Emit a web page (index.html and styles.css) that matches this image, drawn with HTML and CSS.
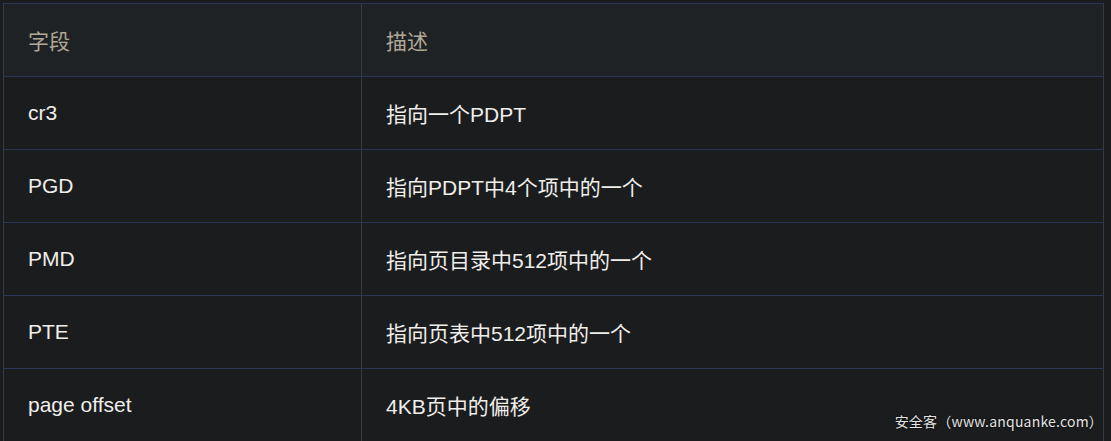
FILE: index.html
```html
<!DOCTYPE html>
<html lang="zh">
<head>
<meta charset="utf-8">
<link rel="stylesheet" href="styles.css">
</head>
<body>
<div class="wrap">
<table class="tbl">
  <thead>
    <tr><th class="c1">字段</th><th>描述</th></tr>
  </thead>
  <tbody>
    <tr><td class="c1">cr3</td><td>指向一个PDPT</td></tr>
    <tr><td class="c1">PGD</td><td>指向PDPT中4个项中的一个</td></tr>
    <tr><td class="c1">PMD</td><td>指向页目录中512项中的一个</td></tr>
    <tr><td class="c1">PTE</td><td>指向页表中512项中的一个</td></tr>
    <tr><td class="c1">page offset</td><td>4KB页中的偏移</td></tr>
  </tbody>
</table>
<div class="mark">安全客（www.anquanke.com）</div>
</div>
</body>
</html>
```
FILE: styles.css
```css
html, body {
  margin: 0;
  padding: 0;
  background: #1b1c1e;
  overflow: hidden;
}
.wrap {
  position: relative;
  width: 1111px;
  height: 441px;
  padding: 3px 0 0 3px;
  box-sizing: border-box;
}
.tbl {
  border-collapse: collapse;
  width: 1101px;
  font-family: "Liberation Sans", "Noto Sans CJK SC", sans-serif;
  font-size: 21px;
  table-layout: fixed;
}
.tbl th, .tbl td {
  padding: 0 0 0 24px;
  text-align: left;
  vertical-align: middle;
  border-left: 1px solid #343a44;
  border-right: 1px solid #343a44;
  border-top: 1px solid #2b3656;
  border-bottom: 1px solid #2b3656;
  box-sizing: border-box;
}
.tbl th {
  font-weight: normal;
  color: #b0a896;
  background: #1f2224;
  height: 73px;
}
.tbl td {
  color: #efeeeb;
  background: #1b1c1e;
  height: 73px;
}
.c1 {
  width: 358px;
}
.mark {
  position: absolute;
  right: 8px;
  bottom: 10px;
  font-family: "Noto Sans CJK SC", "Liberation Sans", sans-serif;
  font-size: 14px;
  letter-spacing: 0.2px;
  color: #e4e4e4;
  text-shadow: 0 0 2px #000;
}
```
